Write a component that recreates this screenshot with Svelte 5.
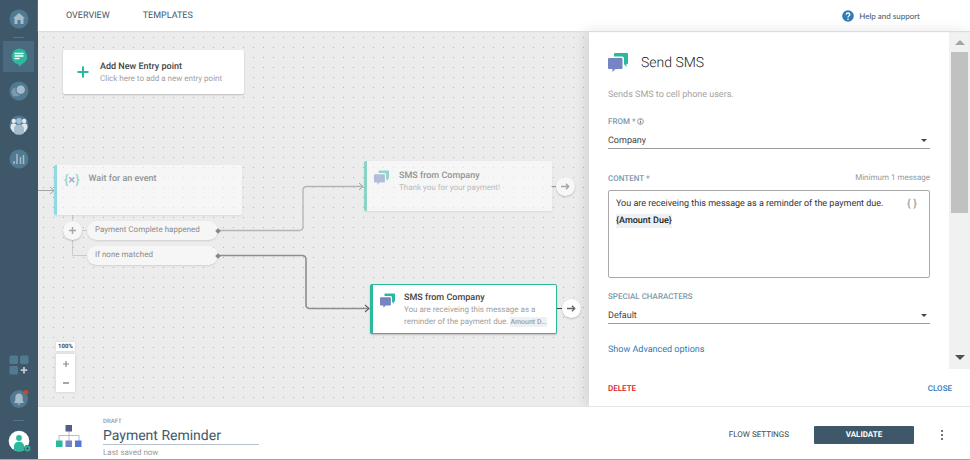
<script lang="ts">
  let flowName = $state("Payment Reminder");
  let sender = $state("Company");
  let charset = $state("Default");
  let message = $state("You are receiveing this message as a reminder of the payment due.");
  let zoom = $state(100);

  const branches = [
    { id: "complete", label: "Payment Complete happened" },
    { id: "none", label: "If none matched" },
  ];
</script>

{#snippet smsIcon()}
  <svg class="sms" viewBox="0 0 20 19" aria-hidden="true">
    <path class="back" d="M7 0h12a1 1 0 0 1 1 1v9a1 1 0 0 1-1 1h-.6v3L16 11V5.500a2 2 0 0 0-2-2H6V1a1 1 0 0 1 1-1z" />
    <path class="front" d="M1 5h12.500a1 1 0 0 1 1 1v9a1 1 0 0 1-1 1H7.500L4.500 19v-3H1a1 1 0 0 1-1-1V6a1 1 0 0 1 1-1z" />
  </svg>
{/snippet}

{#snippet arrow()}
  <svg width="9" height="7" viewBox="0 0 9 7" aria-hidden="true">
    <path d="M0 3.500h7.500M5 .8l2.700 2.700L5 6.200" fill="none" stroke="currentColor" stroke-width="1.400" />
  </svg>
{/snippet}

<div class="app">
  <nav class="rail" aria-label="Main">
    <div class="group">
      <button aria-label="Home">
        <svg width="20" height="20" viewBox="0 0 20 20">
          <circle cx="10" cy="10" r="9.500" class="disc" />
          <path class="glyph" d="M10 4l6 5.300h-1.500V15h-3v-4h-3v4h-3V9.300H4z" />
        </svg>
      </button>
      <hr />
      <button class="active" aria-label="Flows">
        <svg width="20" height="20" viewBox="0 0 20 20">
          <path d="M10 1.500a8 8 0 0 1 3.500 15.200L10.500 19.500 9 17.300A8 8 0 0 1 10 1.500z" fill="#2ab99b" />
          <path d="M5.500 6.500h9M5.500 9h9M5.500 11.500h5" stroke="#fff" stroke-width="1.300" />
        </svg>
      </button>
      <button aria-label="Conversations">
        <svg width="20" height="20" viewBox="0 0 20 20">
          <circle cx="10" cy="10" r="9.500" class="disc" />
          <path d="M7 6.500a4.300 4.300 0 0 0-3 7.500l-.5 1.300h5a4.500 4.500 0 0 0 3-1.500A5 5 0 0 1 7 6.500z" fill="#7d9bb0" />
          <path class="glyph" d="M11.500 4.500a4.200 4.200 0 1 1-1.500 8 4.200 4.200 0 0 1 1.500-8z" />
        </svg>
      </button>
      <button aria-label="People">
        <svg width="20" height="20" viewBox="0 0 20 20">
          <circle cx="10" cy="10" r="9.500" class="disc" />
          <path d="M1.500 13c0-4 1-4.500 3-4.500S8 9 8 12v5H4zM18.500 13c0-4-1-4.500-3-4.500S12 9 12 12v5h4z" fill="#dfe8ee" />
          <circle cx="4.800" cy="6" r="2.200" fill="#dfe8ee" />
          <circle cx="15.200" cy="6" r="2.200" fill="#dfe8ee" />
          <path class="glyph" d="M5 18.200V14c0-3 2-4.500 5-4.500s5 1.500 5 4.500v4.200a9.500 9.500 0 0 1-10 0z" />
          <circle cx="10" cy="6" r="2.900" class="glyph" />
        </svg>
      </button>
      <button aria-label="Analytics">
        <svg width="20" height="20" viewBox="0 0 20 20">
          <circle cx="10" cy="10" r="9.500" class="disc" />
          <path d="M5 12v3M8 5v10M11.500 8v7M14.500 6v9" stroke="#a4bccb" stroke-width="1.500" />
        </svg>
      </button>
    </div>
    <div class="group">
      <button aria-label="Apps">
        <svg width="20" height="20" viewBox="0 0 20 20">
          <g class="disc">
            <rect x=".5" y=".5" width="8.500" height="8.500" rx="1.500" />
            <rect x="11" y=".5" width="8.500" height="8.500" rx="1.500" />
            <rect x=".5" y="11" width="8.500" height="8.500" rx="1.500" />
          </g>
          <path d="M15 12v6.500M11.800 15.200h6.400" stroke="#bccdd8" stroke-width="1.800" />
        </svg>
      </button>
      <button aria-label="Notifications">
        <svg width="20" height="20" viewBox="0 0 20 20">
          <circle cx="10" cy="10" r="9" class="disc" />
          <path class="glyph" d="M10 4.500c2.500 0 3.700 1.800 3.700 4v3.300l1 1.500v.7H5.300v-.7l1-1.500V8.500c0-2.200 1.200-4 3.700-4zM8.500 14.500h3a1.500 1.200 0 0 1-3 0z" />
          <circle cx="17" cy="3.200" r="2.300" fill="#c74a23" />
        </svg>
      </button>
      <hr class="low" />
      <button aria-label="Account">
        <svg width="24" height="24" viewBox="0 0 24 24">
          <circle cx="12" cy="12" r="10.300" fill="#fff" />
          <circle cx="12" cy="9" r="2.900" fill="#2ab99b" />
          <path d="M7 21v-4c0-2.700 2-4.300 5-4.300s5 1.600 5 4.300v4a10.300 10.300 0 0 1-10 0z" fill="#2ab99b" />
          <circle cx="20.500" cy="19.500" r="3.400" fill="#3e586a" />
          <circle cx="20.500" cy="19.500" r="2" fill="none" stroke="#2ab99b" stroke-width="1.500" />
          <path d="M20.500 16.200v1M20.500 21.800v1M17.700 17.800l.8.500M22.500 20.700l.8.500M17.700 21.200l.8-.5M22.500 18.300l.8-.5" stroke="#2ab99b" stroke-width="1.200" />
        </svg>
      </button>
    </div>
  </nav>

  <div class="main">
    <header class="top">
      <a class="tab" href="#overview">OVERVIEW</a>
      <a class="tab" href="#templates">TEMPLATES</a>
      <a class="help" href="#help">
        <svg width="12" height="12" viewBox="0 0 12 12" aria-hidden="true">
          <circle cx="6" cy="6" r="5.800" fill="#2f7bb5" />
          <path d="M4.200 4.800C4.200 3.600 5 3 6 3s1.900.6 1.900 1.600C7.900 5.900 6 5.800 6 7.500" fill="none" stroke="#fff" stroke-width="1.300" />
          <circle cx="6" cy="9.200" r=".8" fill="#fff" />
        </svg>
        Help and support
      </a>
    </header>

    <div class="work">
      <section class="canvas" aria-label="Flow">
        <svg class="wires" aria-hidden="true">
          <g fill="none">
            <path d="M0 159.500h15M12 156l4 3.500-4 3.500" stroke="#a5a5a5" />
            <path d="M34.500 184v6M34.500 209v15.500H49M44 199.500h5" stroke="#cbcbcb" />
            <path d="M181 199.500h80q4 0 4-4v-36q0-4 4-4h56" stroke="#b4b4b4" stroke-width="1.300" />
            <path d="M321 152l4 3.500-4 3.500" stroke="#a0a0a0" />
            <path d="M181 224.500h83q4 0 4 4v45q0 4 4 4h59" stroke="#8e8e8e" stroke-width="1.600" />
            <path d="M327 274l4 3.500-4 3.500" stroke="#666" stroke-width="1.200" />
            <path d="M513 155.500h6" stroke="#999" />
            <path d="M519 277.500h6" stroke="#444" />
          </g>
        </svg>

        <button class="node entry">
          <svg width="12" height="12" viewBox="0 0 12 12" aria-hidden="true">
            <path d="M6 .5v11M.5 6h11" stroke="#2ab99b" stroke-width="2" />
          </svg>
          <span class="text">
            <span class="name">Add New Entry point</span>
            <span class="sub">Click here to add a new entry point</span>
          </span>
        </button>

        <div class="node wait faded">
          <div class="event" aria-hidden="true"><b>{"{"}</b><i>×</i><b>{"}"}</b></div>
          <div class="text"><span class="name">Wait for an event</span></div>
        </div>
        <button class="round add" aria-label="Add branch">
          <svg width="7" height="7" viewBox="0 0 7 7"><path d="M3.500 0v7M0 3.500h7" stroke="currentColor" stroke-width="1.400" /></svg>
        </button>
        <div class="branches">
          {#each branches as b (b.id)}
            <div class="pill">{b.label}</div>
          {/each}
        </div>

        <div class="node thanks faded">
          {@render smsIcon()}
          <div class="text">
            <span class="name">SMS from Company</span>
            <span class="sub">Thank you for your payment!</span>
          </div>
        </div>
        <button class="round next1" aria-label="Add step">{@render arrow()}</button>

        <div class="node selected">
          {@render smsIcon()}
          <div class="text">
            <span class="name">SMS from Company</span>
            <span class="sub">You are receiveing this message as a<br />reminder of the payment due. <mark>Amount D...</mark></span>
          </div>
        </div>
        <button class="round next2" aria-label="Add step">{@render arrow()}</button>

        <div class="zoom">
          <output>{zoom}%</output>
          <div class="steps">
            <button aria-label="Zoom in" onclick={() => (zoom += 10)}>
              <svg width="6" height="6" viewBox="0 0 6 6"><path d="M3 0v6M0 3h6" stroke="currentColor" stroke-width="1.200" /></svg>
            </button>
            <button aria-label="Zoom out" onclick={() => (zoom -= 10)}>
              <svg width="6" height="6" viewBox="0 0 6 6"><path d="M0 3h6" stroke="currentColor" stroke-width="1.500" /></svg>
            </button>
          </div>
        </div>
      </section>

      <aside class="panel">
        <div class="scroll">
          <form class="body" onsubmit={(e) => e.preventDefault()}>
            <div class="title">
              {@render smsIcon()}
              <h2>Send SMS</h2>
            </div>
            <p class="desc">Sends SMS to cell phone users.</p>

            <div class="field">
              <label for="from">FROM *
                <svg width="7" height="7" viewBox="0 0 7 7" aria-hidden="true">
                  <circle cx="3.500" cy="3.500" r="2.900" fill="none" stroke="#999" />
                  <path d="M3.500 1.300v1M3.500 3v2.500" stroke="#888" stroke-width="1.300" />
                </svg>
              </label>
              <div class="pick">
                <select id="from" bind:value={sender}><option>Company</option></select>
                <span class="caret"></span>
              </div>
            </div>

            <div class="field content">
              <div class="row">
                <label for="content">CONTENT *</label>
                <span class="count">Minimum 1 message</span>
              </div>
              <div class="editor">
                <div class="copy">
                  <textarea id="content" rows="1" bind:value={message}></textarea>
                  <strong class="token">{"{Amount Due}"}</strong>
                </div>
                <button type="button" class="braces" aria-label="Insert placeholder">{"{ }"}</button>
              </div>
            </div>

            <div class="field special">
              <label for="charset">SPECIAL CHARACTERS</label>
              <div class="pick">
                <select id="charset" bind:value={charset}><option>Default</option></select>
                <span class="caret"></span>
              </div>
            </div>

            <a class="advanced" href="#advanced">Show Advanced options</a>
          </form>
          <div class="bar" aria-hidden="true">
            <span class="up"></span>
            <span class="track"><span class="thumb"></span></span>
            <span class="down"></span>
          </div>
        </div>
        <div class="actions">
          <button class="delete">DELETE</button>
          <button class="close">CLOSE</button>
        </div>
      </aside>
    </div>

    <footer class="foot">
      <svg class="tree" width="26" height="22" viewBox="0 0 26 22" aria-hidden="true">
        <path d="M13 6v10M3 16v-5.500h20V16" fill="none" stroke="#b9bcc8" />
        <rect x="9.500" width="6.500" height="6.500" fill="#545f85" />
        <rect y="15.500" width="6.500" height="6.500" fill="#2ab99b" />
        <rect x="9.500" y="15.500" width="6.500" height="6.500" fill="#7584c3" />
        <rect x="19" y="15.500" width="6.500" height="6.500" fill="#5677d6" />
      </svg>
      <div class="flow">
        <label for="flow-name">DRAFT</label>
        <input id="flow-name" bind:value={flowName} />
        <span class="saved">Last saved now</span>
      </div>
      <button class="settings">FLOW SETTINGS</button>
      <button class="validate">VALIDATE</button>
      <button class="more" aria-label="More">
        <svg width="4" height="12" viewBox="0 0 4 12">
          <g fill="#555"><circle cx="2" cy="2" r="1.100" /><circle cx="2" cy="6" r="1.100" /><circle cx="2" cy="10" r="1.100" /></g>
        </svg>
      </button>
    </footer>
  </div>
</div>

<style>
  :global(body) { background: #fff; }
  .app { display: flex; box-sizing: border-box; min-height: 100vh; border-bottom: 1px solid #a6a6a6;
    font-family: Roboto, "Liberation Sans", sans-serif; font-size: 9px; line-height: 12px; color: #444;
    text-rendering: geometricPrecision; }
  .app :global(*) { box-sizing: border-box; }
  button, input, select, textarea { font: inherit; color: inherit; background: none; border: 0;
    padding: 0; margin: 0; border-radius: 0; outline: 0; text-rendering: inherit; }
  button { cursor: pointer; }
  a { text-decoration: none; }
  svg { display: block; flex: none; }

  .rail { flex: 0 0 38px; display: flex; flex-direction: column; justify-content: space-between;
    padding: 3px 4px 3px 3px; background: #3e586a; }
  .group { display: flex; flex-direction: column; align-items: center; gap: 3px; }
  .rail button { width: 31px; height: 31px; display: grid; place-items: center; }
  .rail .active { background: #4a6a80; }
  .rail hr { width: 11px; height: 1px; margin: 0; border: 0; background: #56758a; }
  .rail .low { margin: 3px 0 1px; }
  .disc { fill: #527992; }
  .glyph { fill: #a4bccb; }

  .main { flex: 1; min-width: 0; display: flex; flex-direction: column; }
  .top { height: 31px; display: flex; align-items: center; gap: 33px; padding: 0 50px 0 28px;
    position: relative; z-index: 1; box-shadow: 0 1px 1px #dcdcdc; }
  .top a { color: #3e586a; }
  .help { margin-left: auto; display: flex; align-items: center; gap: 5px; font-family: Lato, sans-serif; font-size: 8px; }

  .work { flex: 1; display: flex; }
  .canvas { flex: 1; min-width: 0; position: relative; overflow: hidden;
    background: radial-gradient(circle at 55% 65%, #b4b4b4, transparent 1px) 0 0 / 10px 10px #ececec; }
  .wires { position: absolute; inset: 0; width: 100%; height: 100%; }
  .node { position: absolute; display: flex; align-items: flex-start; width: 188px; height: 50px;
    background: #fff; border-radius: 2px; box-shadow: 0 1px 2px rgba(0, 0, 0, .2); text-align: left; }
  .faded { background: rgba(255, 255, 255, .55); box-shadow: 0 1px 2px rgba(0, 0, 0, .08); }
  .text { display: flex; flex-direction: column; padding-top: 1px; }
  .name { font-weight: 500; color: #444; }
  .sub { font-size: 8px; color: #a0a0a0; white-space: nowrap; }
  .faded .name { color: #949494; }
  .faded .sub { color: #bdbdbd; }
  .faded .sms { opacity: .5; }
  .entry { left: 25px; top: 19px; width: 181px; height: 44px; align-items: center; gap: 11px; padding: 0 14px; }
  .wait { left: 16px; top: 134px; border-left: 3px solid #92d9e2; padding: 7px; gap: 9px; }
  .event { display: flex; align-items: center; height: 18px; font-size: 13px; }
  .event b { font-weight: 500; color: #93d6c6; }
  .event i { font-style: normal; font-weight: 700; color: #a9aed6; }
  .thanks { left: 326px; top: 130px; border-left: 3px solid #8bd4c4; padding: 8px 7px; gap: 10px; }
  .selected { left: 332px; top: 253px; width: 187px; border: 1px solid #2ab99b; border-left-width: 3px;
    padding: 6px 7px; gap: 9px; }
  .node .sms { width: 15px; height: 15px; margin-top: 1px; }
  .selected .sms { margin-top: 2px; }
  mark { background: #eef1f4; color: #a0a0a0; font-size: 7px; font-weight: 500; padding: 1px 0; }
  .sms .back { fill: #2ab99b; }
  .sms .front { fill: #7584c3; }
  .round { position: absolute; width: 19px; height: 19px; border-radius: 50%; background: #fff; color: #666;
    display: grid; place-items: center; box-shadow: 0 1px 2px rgba(0, 0, 0, .2); }
  .add { left: 25px; top: 190px; background: #f7f7f7; color: #a5a5a5; }
  .next1 { left: 518px; top: 146px; background: #f7f7f7; color: #a5a5a5; }
  .next2 { left: 524px; top: 268px; }
  .branches { position: absolute; left: 49px; top: 190px; display: flex; flex-direction: column; gap: 6px; }
  .pill { position: relative; width: 131px; height: 19px; padding: 0 8px; border-radius: 10px; font-size: 8px;
    line-height: 18px; color: #8c8c8c; background: #f6f6f6; box-shadow: 0 1px 2px rgba(0, 0, 0, .12); }
  .pill::after { content: ""; position: absolute; right: -2px; top: 8px; width: 4px; height: 4px;
    background: #888; transform: rotate(45deg); }
  .zoom { position: absolute; left: 18px; bottom: 14px; width: 19px; display: flex; flex-direction: column; gap: 3px; }
  output { background: #fff; font-size: 6px; line-height: 9px; font-weight: 700; text-align: center;
    box-shadow: 0 0 2px rgba(0, 0, 0, .12); }
  .steps { background: #fff; box-shadow: 0 0 3px rgba(0, 0, 0, .14); }
  .steps button { width: 19px; height: 19px; display: grid; place-items: center; color: #888; }

  .panel { flex: 0 0 381px; display: flex; flex-direction: column; position: relative; background: #fff;
    box-shadow: -4px 0 12px rgba(0, 0, 0, .1); }
  .scroll { flex: 1; display: flex; }
  .body { flex: 1; min-width: 0; padding: 21px 19px 13px; }
  .title { display: flex; align-items: center; gap: 13px; height: 21px; }
  .title .sms { width: 20px; height: 19px; }
  h2 { margin: 0; font-size: 14px; line-height: 18px; font-weight: 300; color: #222; }
  .desc { margin: 16px 0 14px; color: #a3a3a3; }
  .field { display: flex; flex-direction: column; gap: 3px; }
  label { color: #7d98aa; font-size: 8px; line-height: 14px; font-weight: 500; }
  label svg { display: inline-block; vertical-align: -1px; }
  .pick { display: flex; align-items: center; height: 17px; border-bottom: 1px solid #9c9c9c; }
  select { flex: 1; appearance: none; height: 16px; padding-top: 1px; }
  .caret { border: 3px solid transparent; border-top-color: #444; border-bottom: 0; margin-right: 3px; pointer-events: none; }
  .content { margin-top: 23px; gap: 4px; }
  .row { display: flex; justify-content: space-between; }
  .count { font-size: 8px; color: #999; }
  .editor { display: flex; height: 88px; padding: 6px 12px 5px 7px; border: 1px solid #a9a9a9; border-radius: 2px; }
  .copy { flex: 1; display: flex; flex-direction: column; align-items: flex-start; gap: 3px; }
  textarea { width: 100%; height: 14px; line-height: 14px; resize: none; overflow: hidden; white-space: nowrap; color: #333; }
  .token { background: #edf1f4; font-weight: 500; line-height: 14px; color: #222; }
  .braces { height: 14px; font-weight: 700; font-size: 11px; color: #aaa; }
  .special { margin-top: 12px; }
  .advanced { display: block; margin-top: 20px; color: #2f7bb5; }
  .bar { flex: 0 0 21px; display: flex; flex-direction: column; align-items: center; background: #f1f1f1; padding: 9px 0; }
  .up { border: 5px solid transparent; border-bottom-color: #a3a3a3; border-top: 0; }
  .down { border: 5px solid transparent; border-top-color: #505050; border-bottom: 0; }
  .track { flex: 1; width: 17px; margin: 7px 0 10px; }
  .thumb { display: block; height: 55%; background: #c1c1c1; }
  .actions { display: flex; justify-content: space-between; align-items: center; height: 37px; padding: 2px 18px 0 19px; }
  .actions button { font-size: 8px; font-weight: 500; }
  .delete { color: #d5171e; }
  .actions .close { color: #2f7bb5; }

  .foot { display: flex; align-items: center; height: 53px; padding: 0 26px 0 18px; border-top: 1px solid #e3e3e3;
    position: relative; background: #fff; }
  .tree { margin-top: 6px; }
  .flow { display: flex; flex-direction: column; width: 156px; margin: 9px auto 0 21px; }
  .flow label { font-size: 6px; line-height: 8px; color: #999; }
  .flow input { width: 100%; height: 19px; padding-top: 2px; border-bottom: 1px solid #b6c1c9; font-size: 14px; color: #3e586a; }
  .saved { margin-top: 3px; font-size: 8px; line-height: 10px; color: #999; }
  .settings { font-size: 8px; color: #444; margin: 4px 25px 0 0; }
  .validate { width: 100px; height: 18px; margin: 4px 26px 0 0; border-radius: 1px; background: #3e586a; color: #fff;
    font-size: 8px; font-weight: 700; }
  .more { margin-top: 4px; }
</style>
